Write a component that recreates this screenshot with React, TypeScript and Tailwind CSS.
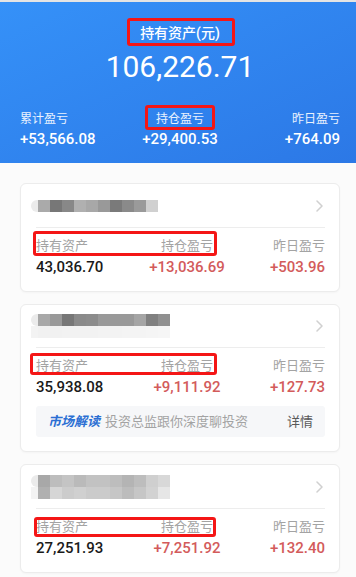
import React from "react";

const CJK = "font-['Roboto','Noto_Sans_CJK_SC',sans-serif]";

type Fund = {
  mosaic: string[][];
  hold: string;
  pos: string;
  yest: string;
  nameH: string;
  mark: string;
  insight?: boolean;
};

const funds: Fund[] = [
  {
    mosaic: [
      ["#aaaaaa", "#777777", "#888888", "#b0b0b0", "#a8a8a8", "#999999", "#7a7a7a", "#8a8a8a", "#9a9a9a", "#d0d0d0"],
    ],
    hold: "43,036.70",
    pos: "+13,036.69",
    yest: "+503.96",
    nameH: "h-[43px]",
    mark: "-left-[3px] -top-[6px] w-[184px] h-[25px]",
  },
  {
    mosaic: [
      ["#a8a8a8", "#999999", "#777777", "#8a8a8a", "#8c8c8c", "#999999", "#999999", "#999999", "#a5a5a5", "#808080", "#909090"],
      ["#f1f1f1", "#f1f1f1", "#f2f2f2", "#f2f2f2", "#f2f2f2", "#f3f3f3", "#f3f3f3", "#f4f4f4", "#f4f4f4", "#f5f5f5", "#f6f6f6"],
    ],
    hold: "35,938.08",
    pos: "+9,111.92",
    yest: "+127.73",
    nameH: "h-[42px]",
    mark: "-left-[6px] -top-[4px] w-[187px] h-[22px]",
    insight: true,
  },
  {
    mosaic: [
      ["#a8a8a8", "#bdbdbd", "#c4c4c4", "#bababa", "#c2c2c2", "#c2c2c2", "#bdbdbd", "#b4b4b4", "#bdbdbd", "#cfcfcf", "#d8d8d8"],
      ["#b0b0b0", "#d6d6d6", "#cccccc", "#d0d0d0", "#cbcbcb", "#cbcbcb", "#c6c6c6", "#bcbcbc", "#c6c6c6", "#d2d2d2", "#e6e6e6"],
    ],
    hold: "27,251.93",
    pos: "+7,251.92",
    yest: "+132.40",
    nameH: "h-[43px]",
    mark: "-left-[2px] -top-[1px] w-[182px] h-[20px]",
  },
];

function Mark({ className }: { className: string }) {
  return (
    <span
      className={`pointer-events-none absolute border-[3px] border-[#f41616] rounded-[3px] ${className}`}
    />
  );
}

function Mosaic({ rows }: { rows: string[][] }) {
  return (
    <div className="-ml-[5px] flex flex-col">
      {rows.map((row, i) => (
        <div key={i} className="flex">
          <span
            className={`w-[7px] h-[12px] ${i === 0 ? "rounded-l-full bg-[#ebebeb]" : "bg-[#f3f3f3]"}`}
          />
          {row.map((c, j) => (
            <span
              key={j}
              className="w-[12px] h-[12px]"
              style={{ background: c }}
            />
          ))}
        </div>
      ))}
    </div>
  );
}

function Chevron() {
  return (
    <svg width="9" height="12" viewBox="0 0 9 12" fill="none">
      <path d="M2 1l5 5-5 5" stroke="#d0d0d0" strokeWidth="1.5" strokeLinecap="round" strokeLinejoin="round" />
    </svg>
  );
}

function FundCard({ f }: { f: Fund }) {
  return (
    <div className="bg-white border border-[#ececec] rounded-[6px] pl-[15px] pr-[14px] pb-[14px] shadow-[0_1px_2px_rgba(0,0,0,0.03)]">
      <div className={`flex items-center justify-between ${f.nameH}`}>
        <Mosaic rows={f.mosaic} />
        <span className="mr-[1px]">
          <Chevron />
        </span>
      </div>
      <div className="h-px bg-[#ededed]" />
      <div className="relative mt-[9px] grid grid-cols-[102px_98px_1fr] text-[13px] leading-[18px] text-[#a3a3a3]">
        <span>持有资产</span>
        <span className="text-center">持仓盈亏</span>
        <span className="text-right">昨日盈亏</span>
        <Mark className={f.mark} />
      </div>
      <div className="mt-[2px] grid grid-cols-[102px_98px_1fr] text-[15px] leading-[20px] font-medium">
        <span className="text-[#1a1a1a]">{f.hold}</span>
        <span className="text-center text-[#d35b5b] whitespace-nowrap">{f.pos}</span>
        <span className="text-right text-[#d35b5b]">{f.yest}</span>
      </div>
      {f.insight && (
        <div className="mt-[9px] h-[31px] bg-[#f6f7f9] rounded-[3px] flex items-center pl-[12px] pr-[12px] text-[13px]">
          <span className="font-bold italic text-[#2b6fd3]">市场解读</span>
          <span className="ml-[5px] text-[#a3a3a3]">投资总监跟你深度聊投资</span>
          <span className="ml-auto text-[#595959]">详情</span>
        </div>
      )}
    </div>
  );
}

export default function App() {
  return (
    <div className={`w-[356px] h-[577px] overflow-hidden bg-[#fbfbfb] ${CJK}`}>
      <div className="h-[2px] bg-[#e4e4e4]" />
      <div className="bg-gradient-to-br from-[#3591f8] to-[#2c78e6] text-white pt-[21px] pb-[14px] pl-[20px] pr-[16px]">
        <div className="flex justify-center">
          <div className="relative text-[14px] leading-[20px] font-medium">
            持有资产(元)
            <Mark className="-left-[13px] -right-[15px] -top-[5px] -bottom-[3px]" />
          </div>
        </div>
        <div className="mt-[6px] text-center text-[30px] leading-[36px]">106,226.71</div>
        <div className="mt-[26px] grid grid-cols-3 text-[12px] leading-[16px] text-white/90">
          <span>累计盈亏</span>
          <span className="flex justify-center">
            <span className="relative">
              持仓盈亏
              <Mark className="-left-[11px] -right-[11px] -top-[6px] -bottom-[3px]" />
            </span>
          </span>
          <span className="text-right">昨日盈亏</span>
        </div>
        <div className="mt-[2px] grid grid-cols-3 text-[15px] leading-[20px] font-medium">
          <span>+53,566.08</span>
          <span className="text-center">+29,400.53</span>
          <span className="text-right">+764.09</span>
        </div>
      </div>
      <div className="mt-[20px] ml-[20px] mr-[16px] flex flex-col gap-[12px]">
        {funds.map((f, i) => (
          <FundCard key={i} f={f} />
        ))}
      </div>
    </div>
  );
}
